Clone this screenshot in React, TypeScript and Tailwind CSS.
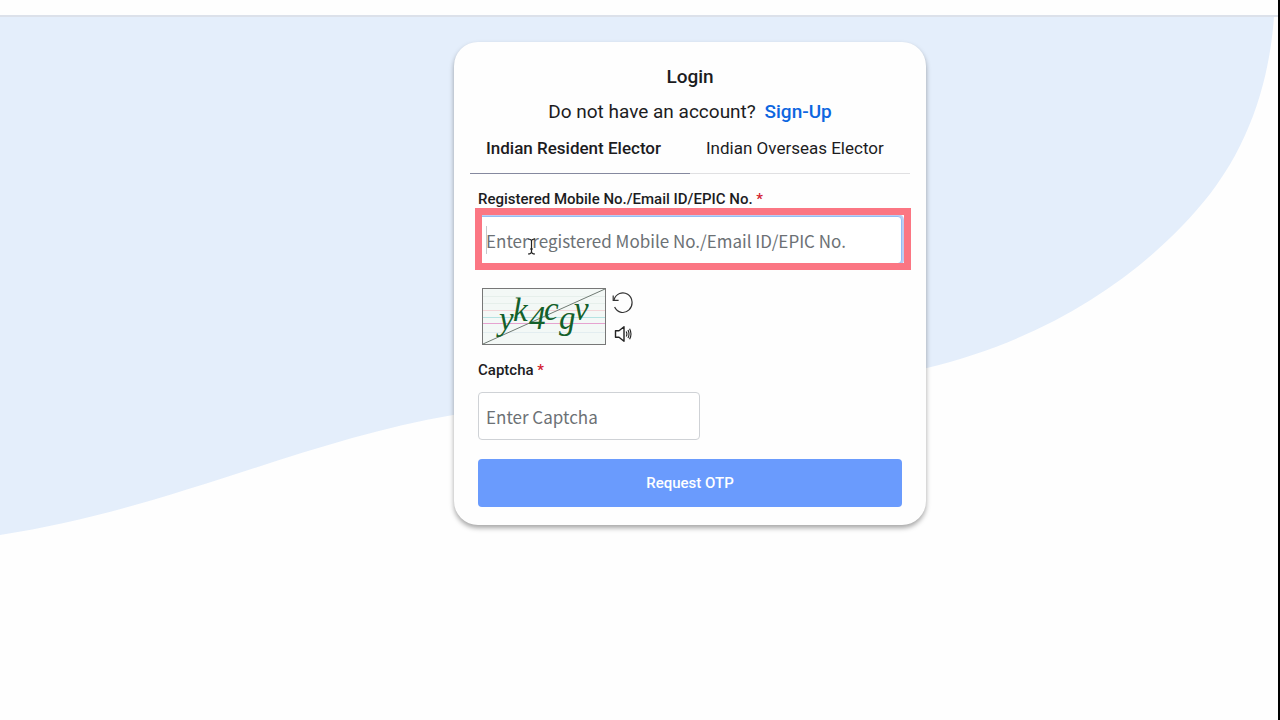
import { useState } from 'react';
import { clsx } from 'clsx';

const TABS = ['Indian Resident Elector', 'Indian Overseas Elector'];

const inputStyles =
  "block h-12 w-full rounded border bg-white px-[7px] font-['Noto_Sans_CJK_SC','Noto_Sans',sans-serif] text-[17px] text-gray-700 placeholder:text-[#6c7175] placeholder:opacity-100 focus:outline-none";

function Wave() {
  return (
    <svg
      className="absolute inset-x-0 top-0 h-[520px] w-full"
      viewBox="0 0 1278 520"
      preserveAspectRatio="none"
      aria-hidden="true"
    >
      <path
        d="M0 0H1274C1270 55 1254 120 1210 177C1150 253 1055 320 927 351C770 385 610 371 453 398C300 424 170 492 0 518Z"
        fill="#e4eefb"
      />
    </svg>
  );
}

function CaptchaImage() {
  return (
    <svg
      className="h-[57px] w-[124px] font-['Liberation_Serif',serif] text-[33px] italic"
      viewBox="0 0 124 57"
      role="img"
      aria-label="Captcha"
    >
      <rect x="0.5" y="0.5" width="123" height="56" fill="#f3f8f6" stroke="#777" />
      <g strokeWidth="1">
        <path d="M1 8.5H123M1 15.5H123" stroke="#e6efeb" />
        <path d="M1 22.5H123" stroke="#f3d5d8" />
        <path d="M1 29.5H123" stroke="#b5e3e2" />
        <path d="M1 35.5H123" stroke="#e6a3d0" />
        <path d="M1 44.5H123" stroke="#e3edf0" />
      </g>
      <path d="M1 56L123 1" stroke="#6f7a73" fill="none" />
      <g fill="#14602a">
        <text x="17" y="42">y</text>
        <text x="31" y="33">k</text>
        <text x="47" y="41">4</text>
        <text x="62" y="32">c</text>
        <text x="77" y="41">g</text>
        <text x="92" y="32">v</text>
      </g>
    </svg>
  );
}

function RefreshIcon() {
  return (
    <svg className="size-[22px]" viewBox="0 0 22 22" fill="none" stroke="#333" strokeWidth="1.2" aria-hidden="true">
      <path d="M2 8A9.2 9.8 0 1 1 2.6 15" />
      <path d="M1.2 3.4V8.4H6.6" />
    </svg>
  );
}

function SpeakerIcon() {
  return (
    <svg className="size-[18px]" viewBox="0 0 18 18" fill="none" stroke="#222" strokeWidth="1.4" aria-hidden="true">
      <path d="M1.5 5.8H5L10 1.8V16.2L5 12.2H1.5Z" strokeLinejoin="round" />
      <path d="M12.2 6.4Q13.6 9 12.2 11.6M14 5Q16 9 14 13M15.6 3.8Q18.4 9 15.6 14.2" strokeWidth="1.1" />
    </svg>
  );
}

function Pointer() {
  return (
    <svg
      className="pointer-events-none absolute top-[22px] left-[49px] h-[17px] w-[9px]"
      viewBox="0 0 9 17"
      fill="none"
      stroke="#222"
      strokeWidth="1.2"
      aria-hidden="true"
    >
      <path d="M1 1Q4.5 1 4.5 3.5V13.5Q4.5 16 1 16M8 1Q4.5 1 4.5 3.5M4.5 13.5Q4.5 16 8 16M3 11H6" />
    </svg>
  );
}

function Required() {
  return <span className="text-[#d3202f]">*</span>;
}

export default function App() {
  const [tab, setTab] = useState(0);

  return (
    <div className="flex min-h-screen flex-col border-r-2 border-black bg-[#fefefe] font-['Roboto',sans-serif] text-[#1c1c1e]">
      <header className="relative z-10 h-[17px] border-b-2 border-[#dce1ea] bg-[#fefefe]" />

      <main className="relative flex grow justify-center pt-[25px] pl-[102px]">
        <Wave />

        <section className="relative w-full max-w-[472px] self-start rounded-3xl bg-[#fefefe] px-4 pt-5 pb-[18px] shadow-[0_3px_5px_rgba(0,0,0,0.35)]">
          <h1 className="text-center text-[19px] leading-[30px] font-medium">Login</h1>
          <p className="mt-[5px] text-center text-[19px] leading-[30px]">
            Do not have an account?{' '}
            <a href="#signup" className="ml-1 font-medium text-[#0d66e0]">
              Sign-Up
            </a>
          </p>

          <div role="tablist" className="mt-1 flex border-b border-[#e0e0e2]">
            {TABS.map((name, i) => (
              <button
                key={name}
                type="button"
                role="tab"
                aria-selected={tab === i}
                onClick={() => setTab(i)}
                className={clsx(
                  '-mb-px flex-1 border-b pb-2 pl-4 text-left text-[17px] leading-[34px] whitespace-nowrap',
                  tab === i ? 'border-[#85899f] font-medium' : 'border-transparent'
                )}
              >
                {name}
              </button>
            ))}
          </div>

          <form className="px-2 pt-[13px]" onSubmit={(e) => e.preventDefault()}>
            <label htmlFor="mobile" className="block text-[15px] leading-6 font-medium">
              Registered Mobile No./Email ID/EPIC No. <Required />
            </label>
            <div className="relative mt-[5px]">
              <input
                id="mobile"
                type="text"
                placeholder="Enter registered Mobile No./Email ID/EPIC No."
                className={clsx(inputStyles, 'border-[#93bdf5] shadow-[0_0_0_2px_#bccdf2]')}
              />
              {/* highlight frame around the active field */}
              <span className="pointer-events-none absolute -top-2 -right-[9px] -bottom-1.5 -left-[3px] border-[7px] border-[#fb7683]" />
              <span className="pointer-events-none absolute top-[10px] left-2 h-7 w-px bg-[#c4c8cc]" />
              <Pointer />
            </div>

            <div className="mt-6 flex gap-1.5 pl-1">
              <CaptchaImage />
              <div className="flex flex-col items-center gap-[11px] pt-1">
                <button type="button" aria-label="Refresh captcha">
                  <RefreshIcon />
                </button>
                <button type="button" aria-label="Play captcha audio">
                  <SpeakerIcon />
                </button>
              </div>
            </div>

            <label htmlFor="captcha" className="mt-[13px] block text-[15px] leading-6 font-medium">
              Captcha <Required />
            </label>
            <div className="mt-[10px] w-[222px]">
              <input
                id="captcha"
                type="text"
                placeholder="Enter Captcha"
                className={clsx(inputStyles, 'border-[#cfd2d6]')}
              />
            </div>

            <button
              type="submit"
              className="mt-[19px] block h-12 w-full rounded bg-[#6a9bfd] text-[15px] font-medium text-white"
            >
              Request OTP
            </button>
          </form>
        </section>
      </main>
    </div>
  );
}
